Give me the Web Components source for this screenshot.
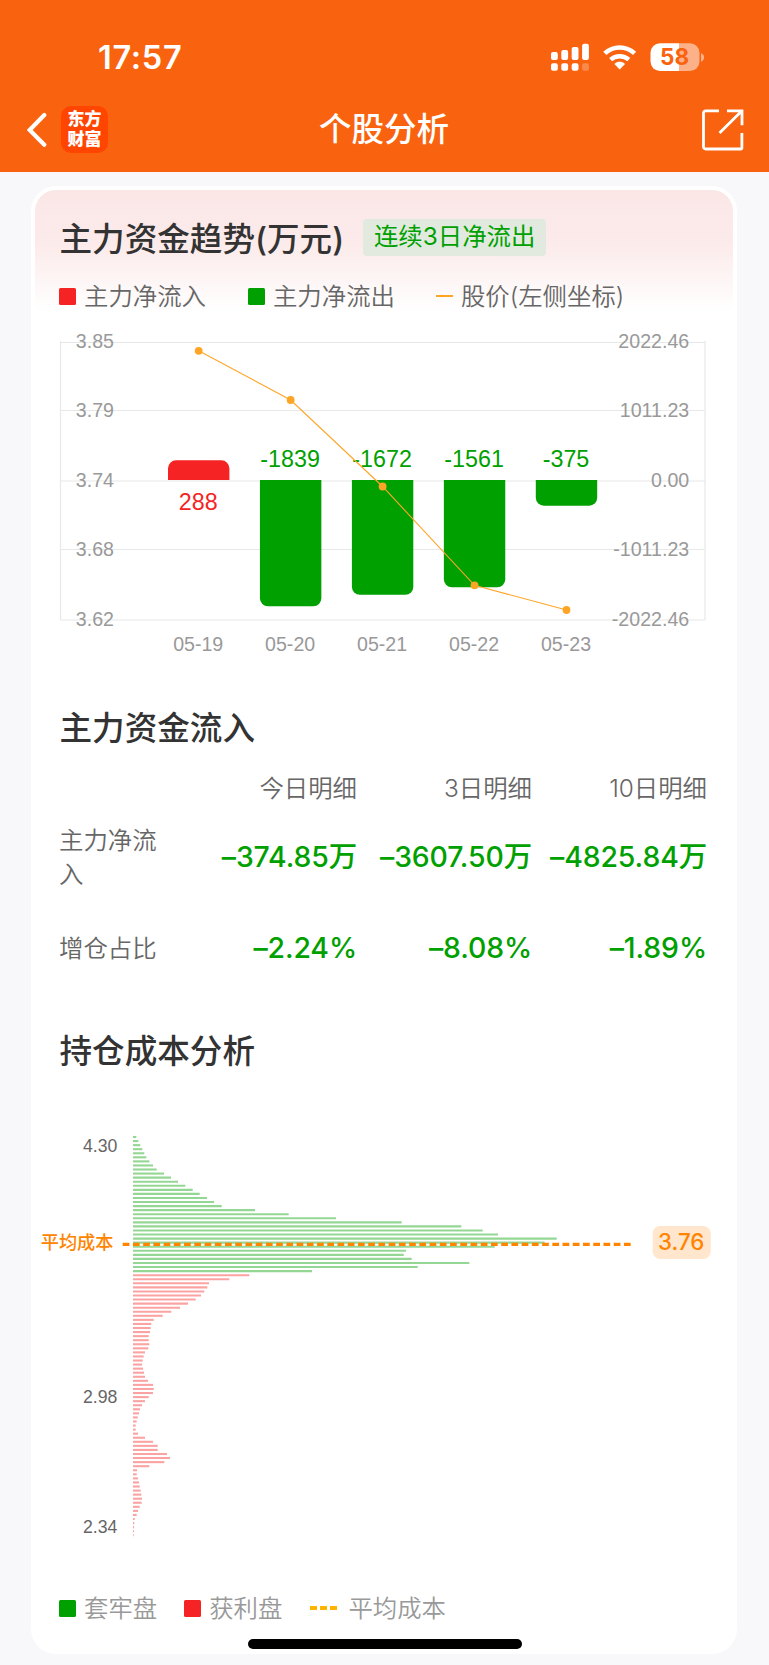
<!DOCTYPE html>
<html lang="zh-CN">
<head>
<meta charset="UTF-8">
<meta name="viewport" content="width=device-width, initial-scale=1.0">
<title>个股分析</title>
<style>
    * { box-sizing: border-box; }
    body {
        margin: 0;
        background: #f8f8fa;
        font-family: "Liberation Sans", "Noto Sans CJK SC", sans-serif;
        color: #333;
    }
</style>
</head>
<body>
<stock-page></stock-page>

<script>
class StatusBar extends HTMLElement {
    constructor() {
        super();
        this.attachShadow({ mode: 'open' });
        this.shadowRoot.innerHTML = `
            <style>
                :host {
                    display: flex;
                    justify-content: space-between;
                    align-items: center;
                    height: 114px;
                    padding: 0 64px 0 98px;
                    color: #fff;
                }
                .time {
                    padding-top: 2px;
                    font: 600 32.5px/40px Inter, sans-serif;
                    letter-spacing: 0.7px;
                }
                .icons { display: flex; align-items: center; }
                svg { display: block; }
            </style>
            <span class="time">${this.getAttribute('time')}</span>
            <div class="icons">
                <svg width="155" height="30" viewBox="550 42 155 30" fill="#fff">
                    <rect x="551" y="52" width="6.8" height="8" rx="2"/>
                    <rect x="561.3" y="50" width="6.8" height="10" rx="2"/>
                    <rect x="571.7" y="47" width="6.8" height="13" rx="2"/>
                    <rect x="582.1" y="43.7" width="6.8" height="16.3" rx="2"/>
                    <rect x="551" y="63.2" width="6.8" height="7.6" rx="2"/>
                    <rect x="561.3" y="63.2" width="6.8" height="7.6" rx="2"/>
                    <rect x="571.7" y="63.2" width="6.8" height="7.6" rx="2"/>
                    <rect x="582.1" y="63.2" width="6.8" height="7.6" rx="2" opacity=".25"/>
                    <path d="M619.7 69.2l-5-5.3c2.8-2.5 7.2-2.5 10 0z" stroke="#fff" stroke-width=".6" stroke-linejoin="round"/>
                    <path d="M610.6 59.7c5.2-4.6 13-4.6 18.2 0" fill="none" stroke="#fff" stroke-width="4.4"/>
                    <path d="M604.8 53.4c8.5-7.9 21.3-7.9 29.8 0" fill="none" stroke="#fff" stroke-width="4.6"/>
                    <path d="M660 43.3h19v27.7h-19a9.5 9.5 0 0 1-9.5-9.5v-8.7a9.5 9.5 0 0 1 9.5-9.5z"/>
                    <path d="M679 43.3h11a9.5 9.5 0 0 1 9.5 9.5v8.7a9.5 9.5 0 0 1-9.5 9.5h-11z" opacity=".5"/>
                    <path d="M701 53.3c4.1 1.2 4.1 7 0 8.4z" opacity=".5"/>
                    <text x="674.6" y="65.3" text-anchor="middle" font-family="Inter, sans-serif" font-weight="700" font-size="22.5" fill="#f96310">${this.getAttribute('battery')}</text>
                </svg>
            </div>
        `;
    }
}
customElements.define('status-bar', StatusBar);

class NavBar extends HTMLElement {
    constructor() {
        super();
        this.attachShadow({ mode: 'open' });
        this.shadowRoot.innerHTML = `
            <style>
                :host {
                    display: grid;
                    grid-template-columns: 1fr auto 1fr;
                    align-items: center;
                    height: 47px;
                    margin-top: -8px;
                    padding: 0 25px 0 27px;
                    color: #fff;
                }
                .left { display: flex; align-items: center; gap: 14px; }
                .logo {
                    width: 47px;
                    height: 47px;
                    box-sizing: border-box;
                    padding-top: 4px;
                    border-radius: 10px;
                    background: #ff4500;
                    font: 900 17px/19.5px "Liberation Sans", "Noto Sans CJK SC", sans-serif;
                    text-align: center;
                }
                h1 {
                    margin: 0 3px 6px 0;
                    font: 500 32.5px/41px "Noto Sans CJK SC", sans-serif;
                }
                svg { display: block; }
                .share { justify-self: end; }
            </style>
            <div class="left">
                <svg width="20" height="36" viewBox="27 112 20 36" fill="none" stroke="#fff" stroke-width="4.1" stroke-linecap="round">
                    <path d="M44.3 115L29.7 130l14.6 14.8"/>
                </svg>
                <div class="logo">东方<br>财富</div>
            </div>
            <h1><slot></slot></h1>
            <svg class="share" width="42" height="42" viewBox="702 108.5 42 42" fill="none" stroke="#fff" stroke-width="2.8">
                <path d="M719 110.3h-13.3a2.2 2.2 0 0 0-2.2 2.2v33.8a2.2 2.2 0 0 0 2.2 2.2h35a1.2 1.2 0 0 0 1.2-1.2V132.5"/>
                <path d="M727 110.3h15v14.5M741.5 110.8L719.5 132.5"/>
            </svg>
        `;
    }
}
customElements.define('nav-bar', NavBar);

class PanelTitle extends HTMLElement {
    constructor() {
        super();
        this.attachShadow({ mode: 'open' });
        this.shadowRoot.innerHTML = `
            <style>
                :host { display: flex; align-items: center; height: 40px; }
                h2 {
                    margin: 0;
                    padding-top: 3px;
                    font: 500 32.6px/40px Inter, "Noto Sans CJK SC", sans-serif;
                    color: #333;
                    white-space: nowrap;
                }
            </style>
            <h2><slot></slot></h2>
            <slot name="extra"></slot>
        `;
    }
}
customElements.define('panel-title', PanelTitle);

class TrendTag extends HTMLElement {
    constructor() {
        super();
        this.attachShadow({ mode: 'open' });
        this.shadowRoot.innerHTML = `
            <style>
                :host {
                    display: block;
                    width: 183px;
                    height: 37px;
                    border-radius: 4px;
                    background: #e2eadf;
                    color: #00a000;
                    font: 400 24.4px/34px Inter, "Noto Sans CJK SC", sans-serif;
                    text-align: center;
                    white-space: nowrap;
                }
            </style>
            <slot></slot>
        `;
    }
}
customElements.define('trend-tag', TrendTag);

class LegendItem extends HTMLElement {
    constructor() {
        super();
        this.attachShadow({ mode: 'open' });
        const type = this.getAttribute('type') || 'box';
        this.shadowRoot.innerHTML = `
            <style>
                :host {
                    display: flex;
                    align-items: center;
                    height: 24px;
                    font: 350 24.4px/24px Inter, "Noto Sans CJK SC", sans-serif;
                    white-space: nowrap;
                }
                .box { width: 17px; height: 17px; margin-right: 8px; border-radius: 1.5px; background: var(--mark); }
                .line { width: 17px; height: 2px; margin-right: 8px; background: var(--mark); }
                .dash { display: flex; gap: 3px; margin-right: 11px; }
                .dash i { width: 7px; height: 4px; background: var(--mark); }
            </style>
            <span class="${type}">${type === 'dash' ? '<i></i><i></i><i></i>' : ''}</span>
            <slot></slot>
        `;
    }
}
customElements.define('legend-item', LegendItem);

class FlowChart extends HTMLElement {
    constructor() {
        super();
        this.attachShadow({ mode: 'open' });
        this.days = [
            { date: '05-19', flow: 288, end: 460.3, price: 350.8 },
            { date: '05-20', flow: -1839, end: 606.3, price: 400 },
            { date: '05-21', flow: -1672, end: 594.8, price: 486.5 },
            { date: '05-22', flow: -1561, end: 587.3, price: 585.3 },
            { date: '05-23', flow: -375, end: 505.7, price: 610 }
        ];
        this.ticks = [
            { y: 342.5, left: '3.85', right: '2022.46' },
            { y: 410.5, left: '3.79', right: '1011.23' },
            { y: 481, left: '3.74', right: '0.00' },
            { y: 549.5, left: '3.68', right: '-1011.23' },
            { y: 620, left: '3.62', right: '-2022.46' }
        ];
        this.render();
    }

    // rounded only at the end away from the zero line
    bar(x, end) {
        const l = x - 30.7, r = x + 30.7, top = 480;
        const k = end < top ? 8 : -8;
        const s = end < top ? 1 : 0;
        return `M${l} ${top}V${end + k}A8 8 0 0 ${s} ${l + 8} ${end}H${r - 8}A8 8 0 0 ${s} ${r} ${end + k}V${top}Z`;
    }

    render() {
        const cx = i => 198.7 + i * 91.95;
        const color = d => d.flow > 0 ? '#f52323' : '#00a000';
        const grid = this.ticks.map(t => `<path d="M60.5 ${t.y}H705"/>`).join('');
        const labels = this.ticks.map((t, i) => `
            <text x="75.8" y="${347.6 + i * 69.5}">${t.left}</text>
            <text x="689.2" y="${347.6 + i * 69.5}" text-anchor="end">${t.right}</text>`).join('');
        const bars = this.days.map((d, i) => `<path d="${this.bar(cx(i), d.end)}" fill="${color(d)}"/>`).join('');
        const values = this.days.map((d, i) =>
            `<text x="${cx(i) - 0.5}" y="${d.flow > 0 ? 509.5 : 466.5}" fill="${color(d)}">${d.flow}</text>`).join('');
        const dates = this.days.map((d, i) => `<text x="${cx(i) - 0.5}" y="651">${d.date}</text>`).join('');
        const dots = this.days.map((d, i) => `<circle cx="${cx(i)}" cy="${d.price}" r="3.9"/>`).join('');

        this.shadowRoot.innerHTML = `
            <style>
                :host { display: block; height: 340px; }
                svg { display: block; }
                text { font-family: "Liberation Sans", Arial, sans-serif; }
            </style>
            <svg width="698" height="340" viewBox="35 330 698 340">
                <g stroke="#e8e8e8" stroke-width="1.2" fill="none">
                    ${grid}
                    <path d="M60.5 341V620M705 341V620"/>
                </g>
                ${bars}
                <g font-size="19.6" fill="#999">${labels}</g>
                <g font-size="19.6" fill="#999" text-anchor="middle">${dates}</g>
                <g font-size="23.3" text-anchor="middle">${values}</g>
                <polyline points="${this.days.map((d, i) => cx(i) + ',' + d.price).join(' ')}" fill="none" stroke="#ffa526" stroke-width="1.1"/>
                <g fill="#ffa526">${dots}</g>
            </svg>
        `;
    }
}
customElements.define('flow-chart', FlowChart);

class FlowTable extends HTMLElement {
    constructor() {
        super();
        this.attachShadow({ mode: 'open' });
        this.shadowRoot.innerHTML = `
            <style>
                :host {
                    display: grid;
                    grid-template-columns: 102px 195px 175px 175px;
                    grid-template-rows: 37px 100px 83px;
                    align-items: center;
                    font: 350 24.4px/34.5px Inter, "Noto Sans CJK SC", sans-serif;
                    color: #666;
                }
                .head, .num { text-align: right; white-space: nowrap; }
                .label { margin-left: -1px; }
                .num {
                    color: #00a000;
                    font-weight: 450;
                    font-size: 28.4px;
                    letter-spacing: -0.1px;
                }
            </style>
            <span></span>
            <span class="head">今日明细</span>
            <span class="head">3日明细</span>
            <span class="head">10日明细</span>
            <span class="label">主力净流入</span>
            <span class="num">–374.85万</span>
            <span class="num">–3607.50万</span>
            <span class="num">–4825.84万</span>
            <span class="label">增仓占比</span>
            <span class="num">–2.24%</span>
            <span class="num">–8.08%</span>
            <span class="num">–1.89%</span>
        `;
    }
}
customElements.define('flow-table', FlowTable);

class CostChart extends HTMLElement {
    constructor() {
        super();
        this.attachShadow({ mode: 'open' });
        this.trapped = [
            3.3, 5.3, 7.3, 9.3, 11.3, 13.3, 16.3, 20, 23.7, 31, 38, 45, 52.3, 59.7, 66.7, 74, 81,
            88.7, 122, 155.7, 203, 268.7, 328.3, 349.7, 365, 423.7, 411.7, 361.7, 273, 270.7,
            278.7, 336.3, 284.7, 179
        ];
        this.profit = [
            116.3, 96.3, 76, 74.3, 71.3, 68, 62.7, 55, 47, 38.3, 29.7, 20.7, 18.3, 17.7, 17, 15.7,
            15.7, 16.3, 15.3, 12, 10.7, 9.7, 9, 10, 11, 12, 15, 20, 20.7, 20, 15.7, 12, 9, 7, 6,
            4.7, 3.7, 2.7, 2.7, 5, 12, 20, 24.7, 24.7, 34, 37, 31.3, 16.3, 4, 3.7, 5, 6, 6.7, 7.7,
            8.3, 9, 8.7, 6.7, 5, 3.7, 1.7, 1.3, 1, 1, 0.7
        ];
        this.render();
    }

    rows(list, start) {
        return list.map((w, i) => `<path d="M133 ${(1137 + (start + i) * 4.064).toFixed(2)}h${w}"/>`).join('');
    }

    render() {
        this.shadowRoot.innerHTML = `
            <style>
                :host { display: block; height: 450px; }
                svg { display: block; }
                .axis { font: 17.7px "Liberation Sans", Arial, sans-serif; }
                .avg { font: 500 18.2px "Noto Sans CJK SC", sans-serif; }
                .price { font: 450 22.3px Inter, sans-serif; }
            </style>
            <svg width="698" height="450" viewBox="35 1110 698 450">
                <g stroke="#00a000" stroke-opacity=".42" stroke-width="2.1">${this.rows(this.trapped, 0)}</g>
                <g stroke="#f52323" stroke-opacity=".42" stroke-width="2.1">${this.rows(this.profit, this.trapped.length)}</g>
                <g class="axis" fill="#666">
                    <text x="83" y="1152.3">4.30</text>
                    <text x="83" y="1402.6">2.98</text>
                    <text x="83" y="1532.6">2.34</text>
                </g>
                <path d="M122.7 1244.3H631.5" stroke="#ff8400" stroke-width="3.2" stroke-dasharray="6.7 3.53"/>
                <text class="avg" x="40.7" y="1248.8" fill="#ff8400">平均成本</text>
                <rect x="652.7" y="1226" width="58" height="33" rx="7.5" fill="#ffe6cd"/>
                <text class="price" x="681.2" y="1250.2" text-anchor="middle" fill="#ff8400">3.76</text>
            </svg>
        `;
    }
}
customElements.define('cost-chart', CostChart);

class AnalysisCard extends HTMLElement {
    constructor() {
        super();
        this.attachShadow({ mode: 'open' });
        this.shadowRoot.innerHTML = `
            <style>
                :host {
                    display: block;
                    box-sizing: border-box;
                    height: 1468px;
                    margin: 14px 32px 11px 31px;
                    padding: 4px;
                    border-radius: 25px;
                    background: #fff;
                }
                .body {
                    display: flow-root;
                    border-radius: 21px 21px 0 0;
                    background: linear-gradient(#fbe6e6, #fcebeb 55px, #fff 122px) no-repeat 0 0 / 100% 122px;
                }
            </style>
            <div class="body"><slot></slot></div>
        `;
    }
}
customElements.define('analysis-card', AnalysisCard);

class StockPage extends HTMLElement {
    constructor() {
        super();
        this.attachShadow({ mode: 'open' });
        this.shadowRoot.innerHTML = `
            <style>
                :host { display: flow-root; position: relative; height: 1665px; overflow: hidden; }
                header { height: 172px; background: #f96310; }
                panel-title { margin-left: 24.5px; }
                .first { margin-top: 27px; }
                trend-tag { margin-left: 19px; }
                .legend { display: flex; margin: 27px 0 0 24px; color: #666; }
                .legend.bottom { margin-top: 36px; color: #999; }
                .red { --mark: #f52323; }
                .green { --mark: #00a000; }
                .orange { --mark: #ffa526; }
                .yellow { --mark: #ffb400; }
                flow-chart { margin-top: 22px; }
                .second { margin-top: 36px; }
                flow-table { margin: 24px 0 0 25px; }
                .third { margin-top: 39px; }
                cost-chart { margin-top: 41px; }
                .home {
                    position: absolute;
                    left: 247.5px;
                    bottom: 16px;
                    width: 274px;
                    height: 10px;
                    border-radius: 5px;
                    background: #000;
                }
            </style>
            <header>
                <status-bar time="17:57" battery="58"></status-bar>
                <nav-bar>个股分析</nav-bar>
            </header>
            <analysis-card>
                <panel-title class="first">主力资金趋势(万元)<trend-tag slot="extra">连续3日净流出</trend-tag></panel-title>
                <div class="legend">
                    <legend-item class="red">主力净流入</legend-item>
                    <legend-item class="green" style="margin-left:42px">主力净流出</legend-item>
                    <legend-item class="orange" type="line" style="margin-left:41px">股价(左侧坐标)</legend-item>
                </div>
                <flow-chart></flow-chart>
                <panel-title class="second">主力资金流入</panel-title>
                <flow-table></flow-table>
                <panel-title class="third">持仓成本分析</panel-title>
                <cost-chart></cost-chart>
                <div class="legend bottom">
                    <legend-item class="green">套牢盘</legend-item>
                    <legend-item class="red" style="margin-left:27px">获利盘</legend-item>
                    <legend-item class="yellow" type="dash" style="margin-left:28px">平均成本</legend-item>
                </div>
            </analysis-card>
            <div class="home"></div>
        `;
    }
}
customElements.define('stock-page', StockPage);
</script>
</body>
</html>
